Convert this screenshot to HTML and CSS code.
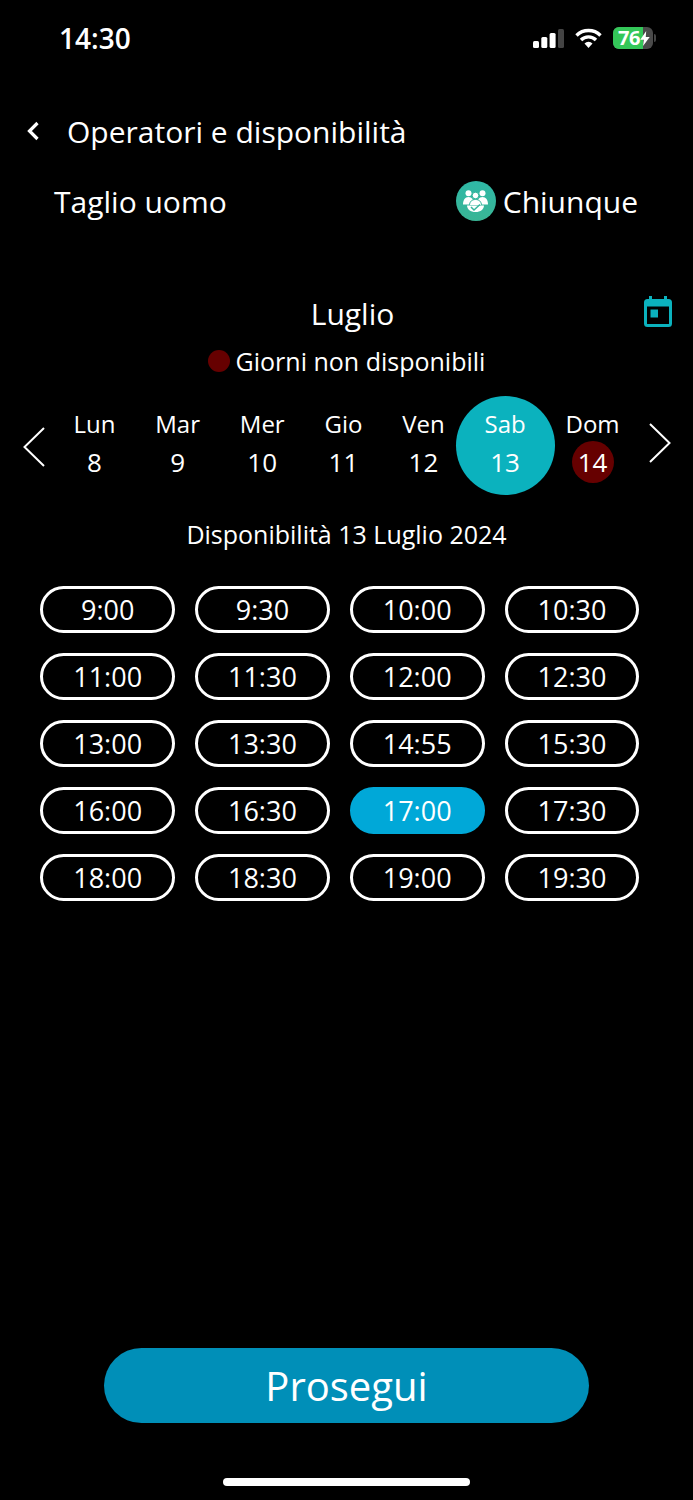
FILE: index.html
```html
<!DOCTYPE html>
<html lang="it">
<head>
    <meta charset="UTF-8">
    <meta name="viewport" content="width=device-width, initial-scale=1.0">
    <title>Operatori e disponibilità</title>
    <link rel="stylesheet" href="styles.css">
</head>
<body>

    <div class="status-bar">
        <span class="clock">14:30</span>
        <div class="status-icons">
            <svg class="signal" width="31" height="19" viewBox="0 0 31 19">
                <rect x="0" y="12" width="6" height="7" rx="1.5" fill="#fff"/>
                <rect x="8.300" y="8" width="6" height="11" rx="1.5" fill="#fff"/>
                <rect x="16.600" y="4" width="6" height="15" rx="1.5" fill="#fff"/>
                <rect x="25" y="0" width="6" height="19" rx="1.5" fill="#444"/>
            </svg>
            <svg class="wifi" width="27" height="20" viewBox="0 0 27 20">
                <path d="M1.500 7.500a17 17 0 0 1 24 0" fill="none" stroke="#fff" stroke-width="3.400"/>
                <path d="M6 12a10.500 10.500 0 0 1 15 0" fill="none" stroke="#fff" stroke-width="3.400"/>
                <path d="M9.500 15.500a5.500 5.500 0 0 1 8 0L13.500 20z" fill="#fff"/>
            </svg>
            <div class="battery">
                <div class="battery-fill"></div>
                <span class="battery-level">76</span>
                <svg class="bolt" width="10" height="15" viewBox="0 0 12 19">
                    <path d="M7.500 0 0 11h4.500L3.500 19 12 7.500H7z" fill="#fff"/>
                </svg>
            </div>
            <div class="battery-tip"></div>
        </div>
    </div>

    <div class="title-row">
        <svg class="back" width="14" height="20" viewBox="0 0 14 20">
            <path d="M11.500 2 3.500 10l8 8" fill="none" stroke="#fff" stroke-width="3.200"/>
        </svg>
        <h1>Operatori e disponibilità</h1>
    </div>

    <div class="service-row">
        <span>Taglio uomo</span>
        <div class="operator">
            <div class="operator-icon">
                <svg width="25" height="22" viewBox="0 0 25 22">
                    <circle cx="5.500" cy="3.200" r="3" fill="#fff"/>
                    <circle cx="19.500" cy="3.200" r="3" fill="#fff"/>
                    <path d="M0 14.500c0-4.500 2-7.500 5.500-7.500S11 10 11 14.500z" fill="#fff"/>
                    <path d="M25 14.500c0-4.500-2-7.500-5.500-7.500S14 10 14 14.500z" fill="#fff"/>
                    <circle cx="12.500" cy="5.500" r="3.300" fill="#fff" stroke="#35b59c"/>
                    <path d="M6.500 15.500c0-4 2.500-6 6-6s6 2 6 6z" fill="#fff" stroke="#35b59c"/>
                    <path d="M4 15.500h17c0 3.800-3.500 6.500-8.500 6.500S4 19.300 4 15.500z" fill="#fff"/>
                    <path d="M8 17l3 3 6-5.500" fill="none" stroke="#35b59c" stroke-width="1.500"/>
                </svg>
            </div>
            <span>Chiunque</span>
        </div>
    </div>

    <div class="month-row">
        <h2>Luglio</h2>
        <svg class="calendar" width="28" height="31" viewBox="0 0 28 31">
            <path d="M5 0h3v3h12V0h3v3h1.500A3.500 3.500 0 0 1 28 6.500v21a3.500 3.500 0 0 1-3.500 3.500h-21A3.500 3.500 0 0 1 0 27.500v-21A3.500 3.500 0 0 1 3.500 3H5zM3 10.500v17a.5.5 0 0 0 .5.5h21a.5.5 0 0 0 .5-.5v-17z" fill="#0bb2be"/>
            <rect x="6.500" y="13.500" width="7.500" height="8" fill="#0bb2be"/>
        </svg>
    </div>

    <div class="legend">
        <span class="legend-dot"></span>
        <span>Giorni non disponibili</span>
    </div>

    <div class="week">
        <svg class="arrow-prev" width="22" height="40" viewBox="0 0 22 40">
            <path d="M21 1 1.500 20 21 39" fill="none" stroke="#fff" stroke-width="2"/>
        </svg>
        <div class="days">
            <div class="day"><span>Lun</span><span class="num">8</span></div>
            <div class="day"><span>Mar</span><span class="num">9</span></div>
            <div class="day"><span>Mer</span><span class="num">10</span></div>
            <div class="day"><span>Gio</span><span class="num">11</span></div>
            <div class="day"><span>Ven</span><span class="num">12</span></div>
            <div class="day selected"><span>Sab</span><span class="num">13</span></div>
            <div class="day closed"><span>Dom</span><span class="num">14</span></div>
        </div>
        <svg class="arrow-next" width="22" height="40" viewBox="0 0 22 40">
            <path d="M1 1 20.500 20 1 39" fill="none" stroke="#fff" stroke-width="2"/>
        </svg>
    </div>

    <p class="avail-title">Disponibilità 13 Luglio 2024</p>

    <div class="slots">
        <div class="slot">9:00</div>
        <div class="slot">9:30</div>
        <div class="slot">10:00</div>
        <div class="slot">10:30</div>
        <div class="slot">11:00</div>
        <div class="slot">11:30</div>
        <div class="slot">12:00</div>
        <div class="slot">12:30</div>
        <div class="slot">13:00</div>
        <div class="slot">13:30</div>
        <div class="slot">14:55</div>
        <div class="slot">15:30</div>
        <div class="slot">16:00</div>
        <div class="slot">16:30</div>
        <div class="slot active">17:00</div>
        <div class="slot">17:30</div>
        <div class="slot">18:00</div>
        <div class="slot">18:30</div>
        <div class="slot">19:00</div>
        <div class="slot">19:30</div>
    </div>

    <button class="next">Prosegui</button>
    <div class="home-bar"></div>

</body>
</html>
```

FILE: styles.css
```css
* {
    box-sizing: border-box;
}
html, body {
    margin: 0;
    background: #000;
}
body {
    display: flex;
    flex-direction: column;
    height: 1500px;
    overflow: hidden;
    font-family: "Open Sans", sans-serif;
    color: #fff;
}

/* status bar */
.status-bar {
    display: flex;
    justify-content: space-between;
    align-items: center;
    height: 76px;
    padding: 0 37px 0 59px;
}
.clock {
    font-size: 28px;
    font-weight: 600;
    line-height: 74px;
}
.status-icons {
    display: flex;
    align-items: center;
}
.signal {
    margin-right: 11px;
}
.wifi {
    margin-right: 11px;
}
.battery {
    position: relative;
    display: flex;
    align-items: center;
    width: 40px;
    height: 22px;
    border-radius: 6px;
    background: #4a4a4a;
}
.battery-fill {
    position: absolute;
    left: 0;
    top: 0;
    bottom: 0;
    width: 30px;
    border-radius: 6px 0 0 6px;
    background: #34c759;
}
.battery-level {
    position: relative;
    margin-left: 5px;
    font-size: 20px;
    font-weight: 700;
    line-height: 22px;
    letter-spacing: -0.5px;
}
.bolt {
    position: absolute;
    right: 3px;
    top: 4px;
}
.battery-tip {
    width: 2px;
    height: 8px;
    margin-left: 1px;
    border-radius: 0 2px 2px 0;
    background: #444;
}

/* header */
.title-row {
    display: flex;
    align-items: center;
    height: 46px;
    margin-top: 32px;
    padding-left: 26px;
}
.back {
    margin-right: 27px;
}
h1 {
    margin: 0;
    font-size: 30px;
    font-weight: 400;
}
.service-row {
    display: flex;
    justify-content: space-between;
    align-items: center;
    height: 42px;
    margin-top: 26px;
    padding: 0 55px 0 54px;
    font-size: 30px;
}
.operator {
    display: flex;
    align-items: center;
    gap: 7px;
}
.operator-icon {
    display: flex;
    justify-content: center;
    align-items: center;
    width: 40px;
    height: 40px;
    border-radius: 50%;
    background: linear-gradient(#2fb8a6, #3ab595);
}

/* month */
.month-row {
    position: relative;
    height: 44px;
    margin-top: 70px;
    padding-left: 12px;
    text-align: center;
}
h2 {
    margin: 0;
    font-size: 30px;
    font-weight: 400;
    line-height: 44px;
}
.calendar {
    position: absolute;
    right: 21px;
    top: 4px;
}
.legend {
    display: flex;
    justify-content: center;
    align-items: center;
    gap: 6px;
    height: 36px;
    margin-top: 7px;
    font-size: 25px;
}
.legend-dot {
    width: 22px;
    height: 22px;
    border-radius: 50%;
    background: #660000;
}

/* week strip */
.week {
    display: flex;
    align-items: center;
    height: 84px;
    margin-top: 24px;
    padding-left: 23px;
}
.arrow-prev {
    margin-top: 4px;
}
.arrow-next {
    margin-top: -4px;
}
.days {
    display: flex;
    gap: 39.8px;
    margin: 0 29px 2px 28.5px;
}
.day {
    position: relative;
    display: flex;
    flex-direction: column;
    align-items: center;
    font-size: 24px;
    line-height: 36px;
}
.day span {
    position: relative;
}
.num {
    font-size: 26px;
    line-height: 40px;
}
.selected::before {
    content: "";
    position: absolute;
    left: 50%;
    top: 50%;
    width: 99px;
    height: 99px;
    margin: -48.5px 0 0 -49.5px;
    border-radius: 50%;
    background: #0bb2be;
}
.closed::before {
    content: "";
    position: absolute;
    left: 50%;
    bottom: -1px;
    width: 42px;
    height: 42px;
    margin-left: -21px;
    border-radius: 50%;
    background: #660000;
}

.avail-title {
    margin: 30px 0 0;
    font-size: 25px;
    line-height: 34px;
    text-align: center;
}

/* time slots */
.slots {
    display: grid;
    grid-template-columns: repeat(4, 1fr);
    gap: 20px;
    margin-top: 35px;
    padding: 0 53.7px 0 40.3px;
}
.slot {
    height: 47px;
    border: 3px solid #fff;
    border-radius: 24px;
    font-size: 27px;
    line-height: 41px;
    text-align: center;
}
.active {
    border-color: #00a8d8;
    background: #00a8d8;
}

/* footer */
.next {
    align-self: center;
    width: 485px;
    height: 75px;
    margin-top: auto;
    border: none;
    border-radius: 38px;
    background: #008fb8;
    color: #fff;
    font-family: inherit;
    font-size: 40px;
}
.home-bar {
    align-self: center;
    width: 247px;
    height: 8px;
    margin: 55px 0 14px;
    border-radius: 4px;
    background: #fff;
}
```
